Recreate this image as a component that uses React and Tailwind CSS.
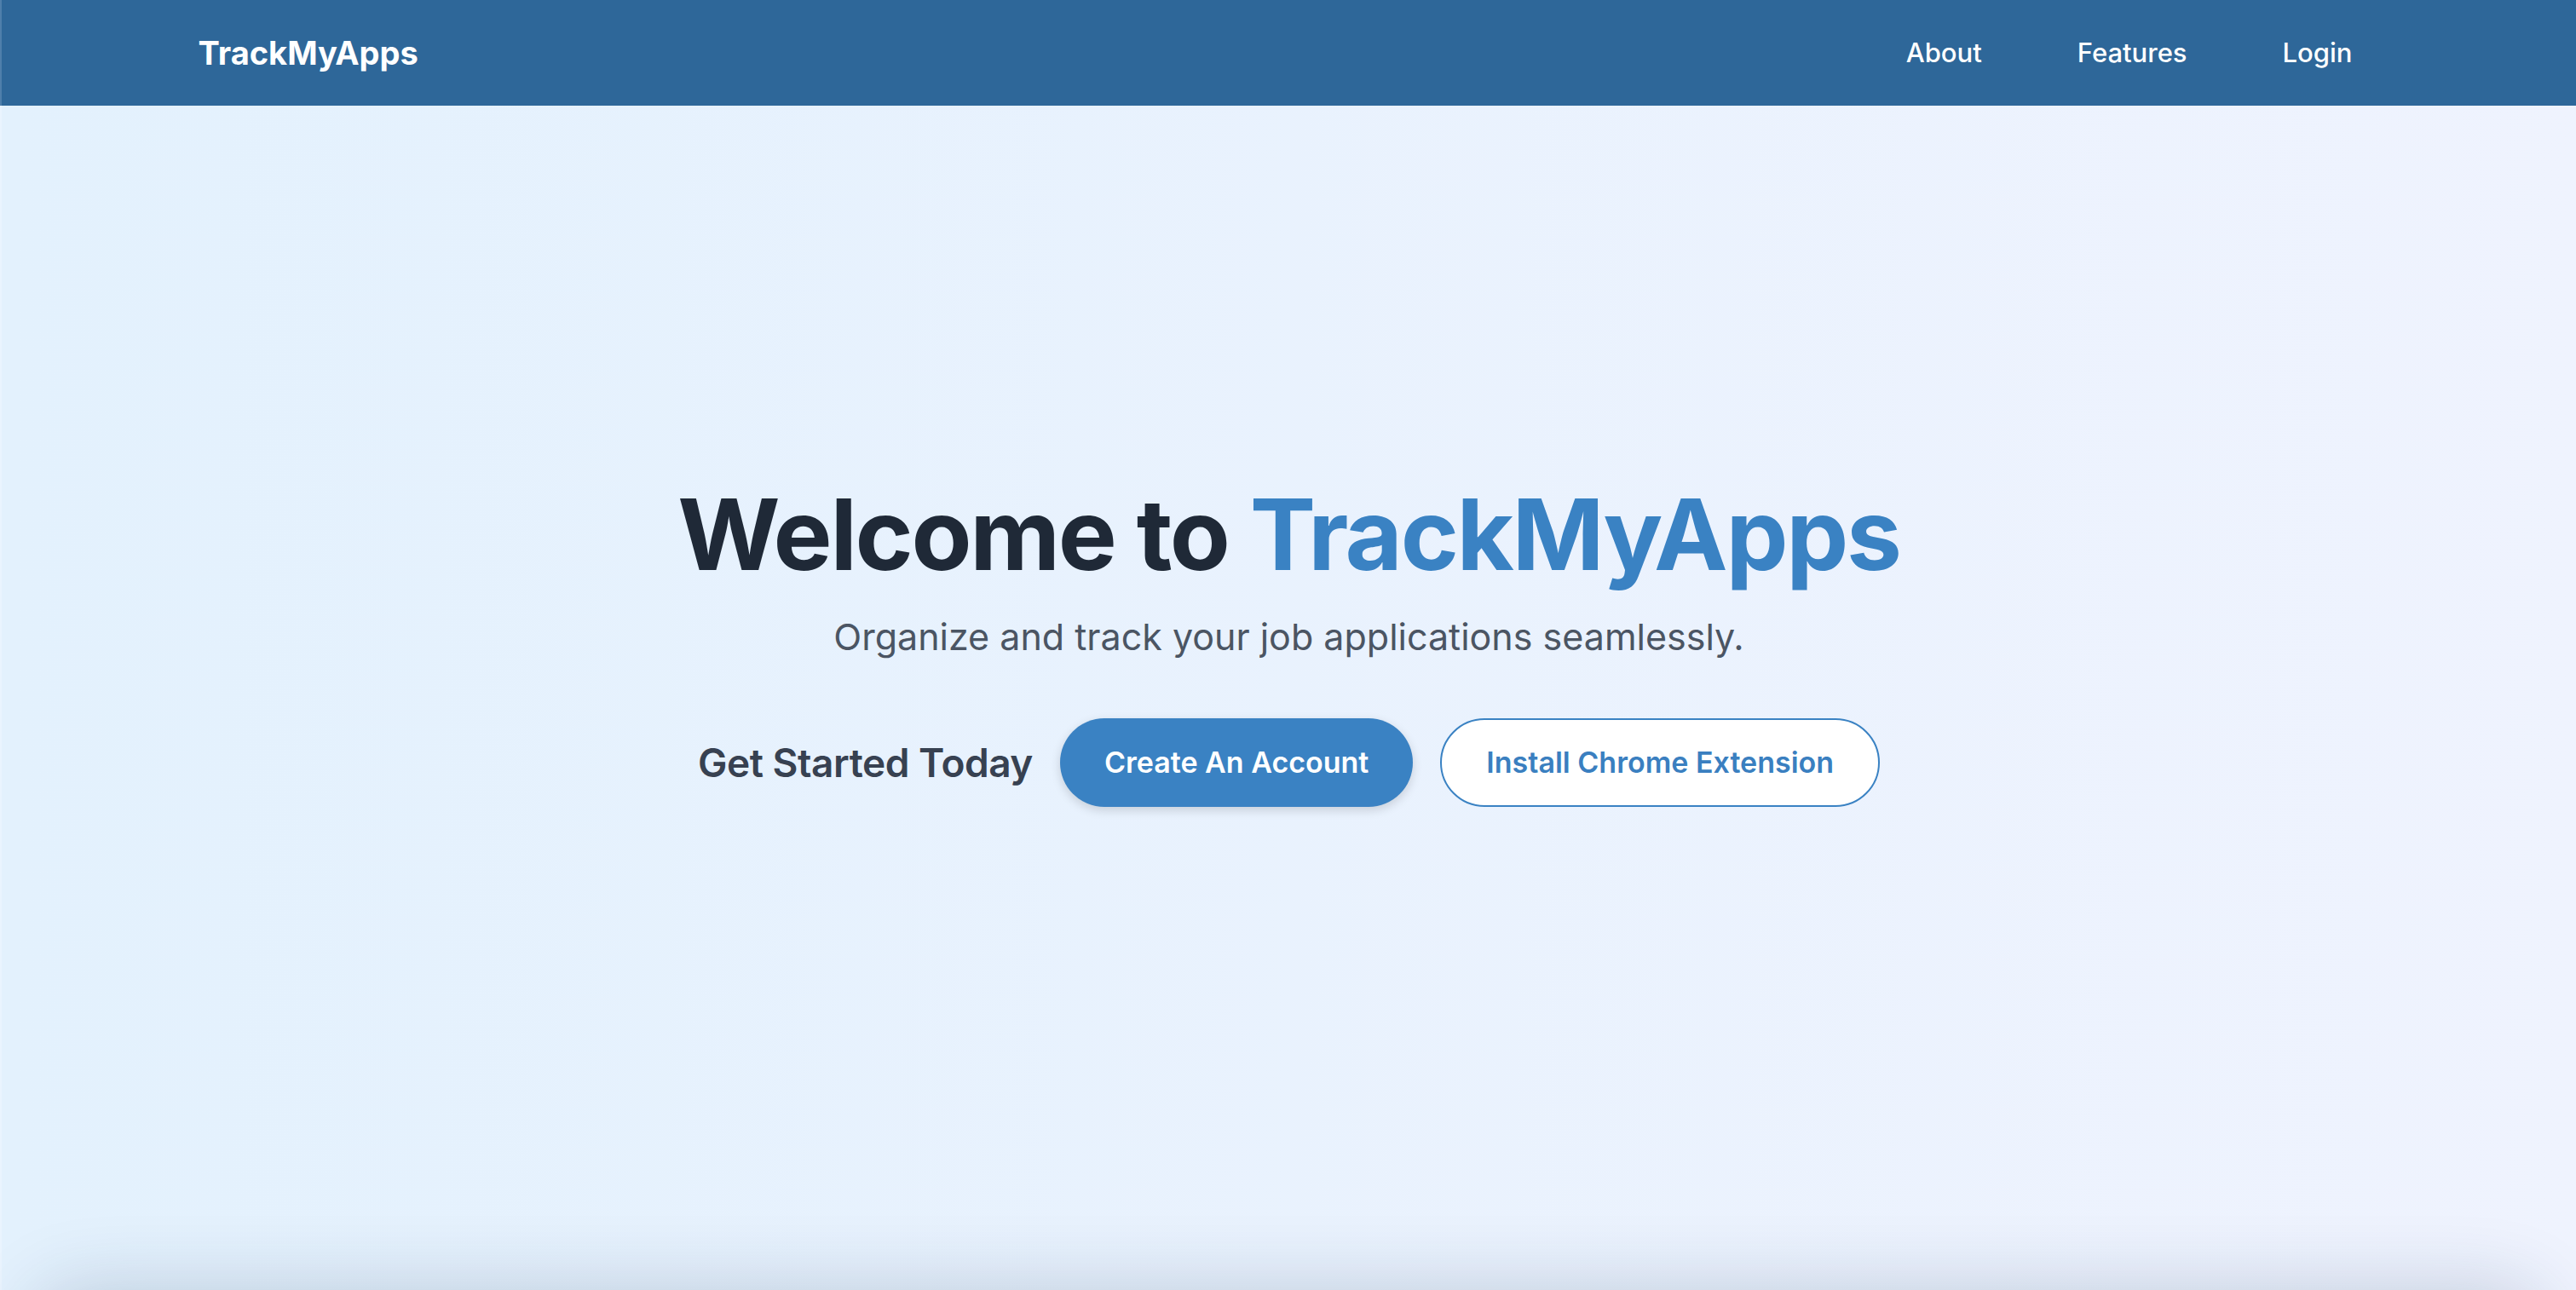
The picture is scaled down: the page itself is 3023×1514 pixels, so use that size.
export default function App() {
  return (
    <div
      className="min-h-screen bg-linear-to-r from-[#e3f1fd] to-[#eff3fe] border-l-2 border-[#eaf4fe]"
      style={{ fontFamily: 'Inter, "Noto Sans", sans-serif' }}
    >
      <header className="fixed inset-x-0 top-0 z-10 h-[124px] border-l-2 border-[#4f7fab] bg-[#2e6799]">
        <div className="mx-auto flex h-full max-w-[2560px] items-center justify-between">
          <a className="text-[38px] font-bold leading-none text-white">TrackMyApps</a>
          <nav className="flex items-center gap-[48px]">
            <a className="px-[32px] text-[31px] font-medium text-white">About</a>
            <a className="px-[32px] text-[31px] font-medium text-white">Features</a>
            <a className="px-[32px] text-[31px] font-medium text-white">Login</a>
          </nav>
        </div>
      </header>

      <main className="flex h-[1514px] flex-col items-center justify-center text-center">
        <h1 className="text-[116px] font-bold leading-[120px] tracking-[-0.02em] text-[#1f2937]">
          Welcome to <span className="text-[#3a82c3]">TrackMyApps</span>
        </h1>
        <p className="mt-[32px] text-[43px] leading-[56px] text-[#4b5563]">
          Organize and track your job applications seamlessly.
        </p>
        <div className="mt-[68px] flex items-center gap-[32px]">
          <span className="text-[46px] font-semibold tracking-[-0.01em] text-[#374151]">Get Started Today</span>
          <button className="rounded-full bg-[#3a82c3] px-[52px] py-[24px] text-[34px] font-semibold leading-[56px] text-white shadow-[0_4px_12px_rgba(0,0,0,0.15)]">
            Create An Account
          </button>
          <button className="rounded-full border-2 border-[#3a82c3] bg-white px-[52px] py-[22px] text-[34px] font-semibold leading-[56px] text-[#3a7fc0]">
            Install Chrome Extension
          </button>
        </div>
      </main>

      <section className="mx-[40px] h-[400px] rounded-[48px] bg-white shadow-[0_0_90px_rgba(20,45,80,0.2)]" />
    </div>
  );
}
